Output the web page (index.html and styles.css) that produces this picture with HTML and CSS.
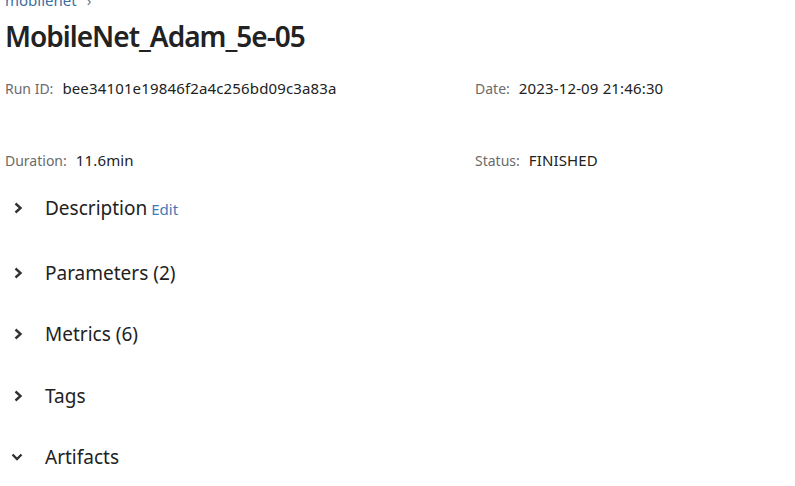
FILE: index.html
```html
<!DOCTYPE html>
<html>
<head>
<meta charset="utf-8">
<link rel="stylesheet" href="styles.css">
</head>
<body>
<div class="page">
  <nav class="crumbs"><a class="crumb-link">mobilenet</a><span class="crumb-sep">›</span></nav>
  <h1 class="title">MobileNet_Adam_5e-05</h1>
  <div class="meta">
    <div class="meta-item"><span class="meta-label">Run ID:</span><span class="meta-value">bee34101e19846f2a4c256bd09c3a83a</span></div>
    <div class="meta-item"><span class="meta-label">Date:</span><span class="meta-value">2023-12-09 21:46:30</span></div>
    <div class="meta-item"><span class="meta-label">Duration:</span><span class="meta-value">11.6min</span></div>
    <div class="meta-item"><span class="meta-label">Status:</span><span class="meta-value">FINISHED</span></div>
  </div>
  <div class="sections">
    <div class="section first">
      <svg class="chev" viewBox="0 0 10 12" width="10" height="12"><path d="M2.5 1.5 L7.5 6 L2.5 10.5" fill="none" stroke="#333" stroke-width="2.4"/></svg>
      <span class="section-title">Description</span><a class="edit">Edit</a>
    </div>
    <div class="section">
      <svg class="chev" viewBox="0 0 10 12" width="10" height="12"><path d="M2.5 1.5 L7.5 6 L2.5 10.5" fill="none" stroke="#333" stroke-width="2.4"/></svg>
      <span class="section-title">Parameters (2)</span>
    </div>
    <div class="section">
      <svg class="chev" viewBox="0 0 10 12" width="10" height="12"><path d="M2.5 1.5 L7.5 6 L2.5 10.5" fill="none" stroke="#333" stroke-width="2.4"/></svg>
      <span class="section-title">Metrics (6)</span>
    </div>
    <div class="section">
      <svg class="chev" viewBox="0 0 10 12" width="10" height="12"><path d="M2.5 1.5 L7.5 6 L2.5 10.5" fill="none" stroke="#333" stroke-width="2.4"/></svg>
      <span class="section-title">Tags</span>
    </div>
    <div class="section">
      <svg class="chev down" viewBox="0 0 12 10" width="12" height="10"><path d="M1.5 2.5 L6 7 L10.5 2.5" fill="none" stroke="#333" stroke-width="2.4"/></svg>
      <span class="section-title">Artifacts</span>
    </div>
  </div>
</div>
</body>
</html>
```

FILE: styles.css
```css
html, body {
  margin: 0;
  padding: 0;
  background: #fff;
}
body {
  font-family: "Noto Sans", "Open Sans", sans-serif;
  color: #333;
  overflow: hidden;
}
.page {
  padding-left: 5px;
  margin-top: -12px;
}
.crumbs {
  height: 24px;
  font-size: 15px;
  line-height: 24px;
}
.crumb-link {
  color: #3a6fa3;
}
.crumb-sep {
  margin-left: 10px;
  color: #6b7785;
}
.title {
  margin: 5px 0 0 0;
  font-size: 28px;
  font-weight: 600;
  letter-spacing: -1px;
  line-height: 38px;
  color: #222;
}
.meta {
  display: grid;
  grid-template-columns: 470px 1fr;
  row-gap: 49px;
  margin-top: 22px;
}
.meta-item {
  font-size: 14px;
  line-height: 22px;
  display: flex;
  align-items: baseline;
  gap: 9px;
}
.meta-label {
  color: #6b6b6b;
}
.meta-value {
  color: #222;
  font-size: 15px;
  letter-spacing: 0.15px;
}
.sections {
  margin-top: 1px;
}
.section {
  display: flex;
  align-items: center;
  height: 61.5px;
}
.section.first {
  height: 69px;
}
.chev {
  margin-left: 8px;
  width: 10px;
  margin-right: 22px;
  flex: none;
}
.chev.down {
  margin-left: 6px;
  width: 12px;
  margin-right: 22px;
}
.section-title {
  font-size: 19px;
  color: #222;
}
.edit {
  font-size: 15px;
  color: #3e7bb6;
  margin-left: 4px;
  margin-top: 2px;
}
```
